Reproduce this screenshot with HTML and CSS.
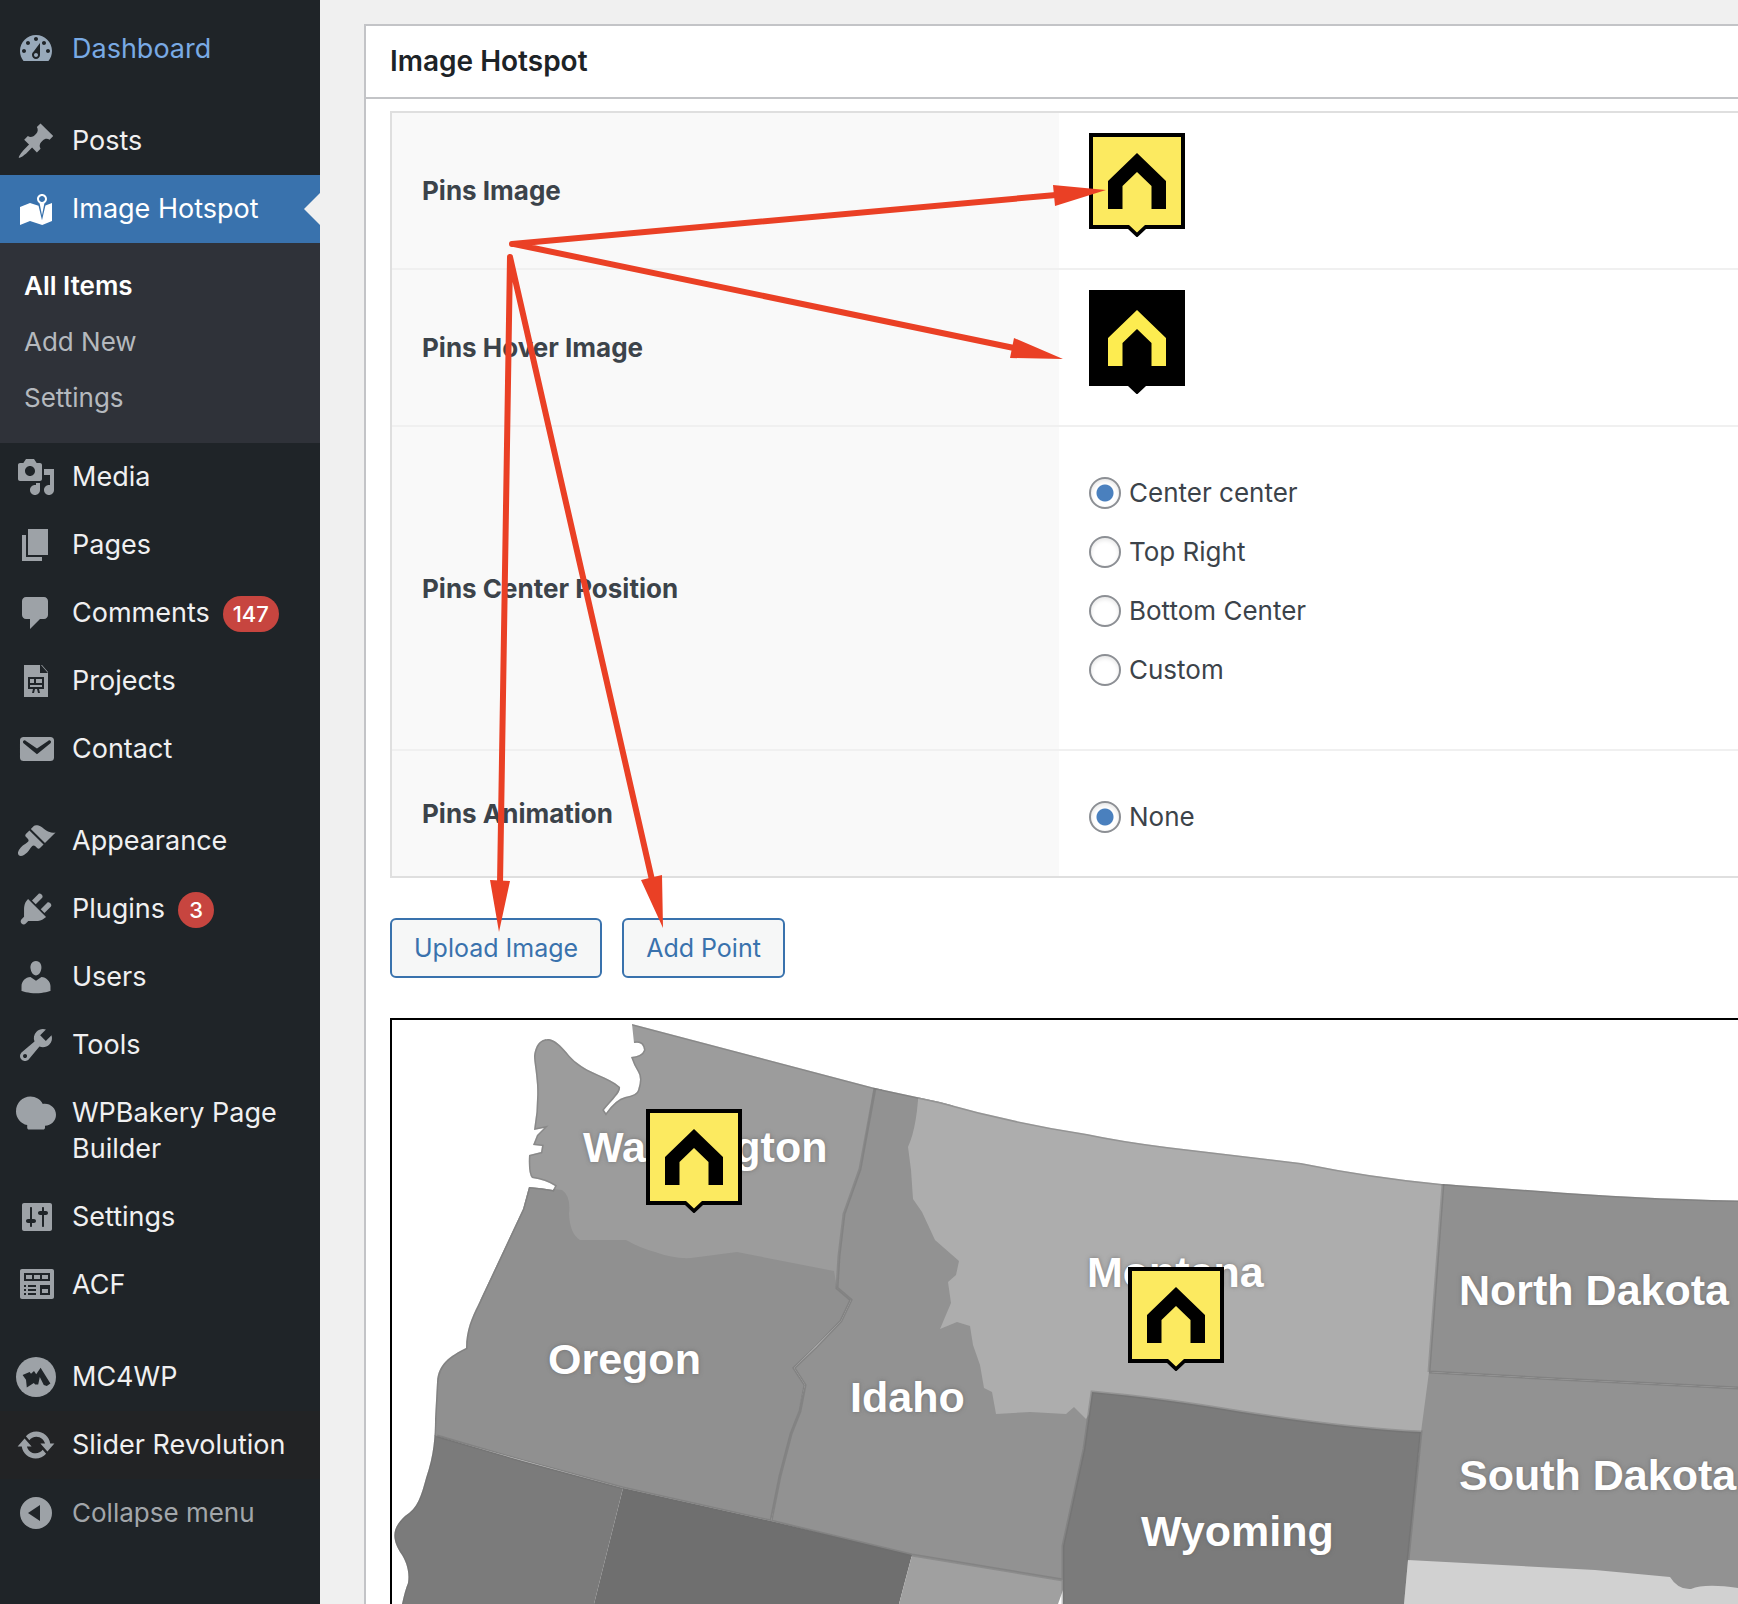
FILE: index.html
```html
<!DOCTYPE html>
<html lang="en">
<head>
    <meta charset="UTF-8">
    <meta name="viewport" content="width=device-width, initial-scale=1.0">
    <title>Image Hotspot</title>
    <link rel="stylesheet" href="styles.css">
</head>
<body>
    <!-- shared pin shape -->
    <svg class="defs" aria-hidden="true">
        <symbol id="pin" viewBox="0 0 96 104">
            <path class="pin-frame" d="M0 0h96v96H57l-9 8.500-9-8.500H0z"/>
            <path class="pin-face" d="M4 4h88v88H56l-8 7.500L40 92H4z"/>
            <path class="pin-house" d="M48 20L77 48V76H62.500V53L48 39 33.500 53V76H19V48z"/>
        </symbol>
    </svg>

    <aside class="sidebar">
        <nav>
            <ul class="menu">
                <li class="hover"><a href="#">
                    <svg class="icon" viewBox="0 0 20 20"><path d="M3.760 16h12.480C17.340 14.630 18 12.900 18 11c0-4.410-3.580-8-8-8s-8 3.590-8 8c0 1.900.66 3.630 1.760 5zM10 4c.55 0 1 .45 1 1s-.45 1-1 1-1-.45-1-1 .45-1 1-1zM6 6c.55 0 1 .45 1 1s-.45 1-1 1-1-.45-1-1 .45-1 1-1zm8 0c.55 0 1 .45 1 1s-.45 1-1 1-1-.45-1-1 .45-1 1-1zm-5.370 5.550L12 7v6c0 1.100-.9 2-2 2s-2-.9-2-2c0-.57.24-1.080.63-1.450zM4 10c.55 0 1 .45 1 1s-.45 1-1 1-1-.45-1-1 .45-1 1-1zm12 0c.55 0 1 .45 1 1s-.45 1-1 1-1-.45-1-1 .45-1 1-1zm-5 3c0-.55-.45-1-1-1s-1 .45-1 1 .45 1 1 1 1-.45 1-1z"/></svg>
                    <span class="name">Dashboard</span></a></li>
                <li class="separator"></li>
                <li><a href="#">
                    <svg class="icon" viewBox="0 0 20 20"><path d="M10.440 3.020l1.820-1.820 6.360 6.350-1.830 1.820c-1.050-.68-2.480-.57-3.410.36l-.75.75c-.92.93-1.040 2.350-.35 3.410l-1.830 1.820-2.410-2.410-2.800 2.790c-.42.42-3.380 2.710-3.800 2.290s1.860-3.390 2.280-3.810l2.790-2.790L4.100 9.360l1.830-1.820c1.050.69 2.480.57 3.400-.36l.75-.75c.93-.92 1.050-2.350.36-3.410z"/></svg>
                    <span class="name">Posts</span></a></li>
                <li class="current"><a href="#">
                    <svg class="icon" viewBox="0 0 20 20"><path d="M13 13.140l1.170-5.940c.79-.43 1.330-1.250 1.330-2.200 0-1.380-1.120-2.500-2.500-2.500S10.500 3.620 10.500 5c0 .95.54 1.770 1.330 2.200zm0-9.640c.83 0 1.500.67 1.500 1.500s-.67 1.500-1.500 1.500-1.500-.67-1.500-1.500.67-1.500 1.500-1.500zm1.720 4.800L18 6.970v9L13.120 18 7 15.970l-5 2v-9l5-2 4.270 1.410 1.730 7.300z"/></svg>
                    <span class="name">Image Hotspot</span></a>
                    <ul class="submenu">
                        <li><a href="#" class="active">All Items</a></li>
                        <li><a href="#">Add New</a></li>
                        <li><a href="#">Settings</a></li>
                    </ul>
                </li>
                <li><a href="#">
                    <svg class="icon" viewBox="0 0 20 20"><path d="M13 11V4c0-.55-.45-1-1-1h-1.670L9 1H5L3.670 3H2c-.55 0-1 .45-1 1v7c0 .55.45 1 1 1h10c.55 0 1-.45 1-1zM7 4.500c1.380 0 2.500 1.120 2.500 2.500S8.380 9.500 7 9.500 4.500 8.380 4.500 7 5.620 4.500 7 4.500zM14 6h5v10.500c0 1.380-1.120 2.500-2.500 2.500S14 17.880 14 16.500s1.120-2.500 2.500-2.500c.17 0 .34.02.5.05V9h-3V6zm-4 8.050V13h2v3.500c0 1.380-1.120 2.500-2.500 2.500S7 17.880 7 16.500 8.120 14 9.500 14c.17 0 .34.02.5.05z"/></svg>
                    <span class="name">Media</span></a></li>
                <li><a href="#">
                    <svg class="icon" viewBox="0 0 20 20"><path d="M6 15V2h10v13H6zm-1 1h8v2H3V5h2v11z"/></svg>
                    <span class="name">Pages</span></a></li>
                <li><a href="#">
                    <svg class="icon" viewBox="0 0 20 20"><path d="M5 2h9c1.100 0 2 .9 2 2v7c0 1.100-.9 2-2 2h-2l-5 5v-5H5c-1.100 0-2-.9-2-2V4c0-1.100.9-2 2-2z"/></svg>
                    <span class="name">Comments</span><span class="badge">147</span></a></li>
                <li><a href="#">
                    <svg class="icon" viewBox="0 0 20 20"><path fill-rule="evenodd" d="M4 2h8v4h4v12H4zM13 2l3 3.500V6l-3.500-4zM6 8v6h2.500L8 16h1l.5-2h1l.5 2h1l-.5-2H14V8zM7 9h2v2H7zM10 9h3v2h-3zM7 12h6v1H7z"/></svg>
                    <span class="name">Projects</span></a></li>
                <li><a href="#">
                    <svg class="icon" viewBox="0 0 20 20"><path d="M3.870 4h13.250C18.370 4 19 4.590 19 5.790v8.420c0 1.190-.63 1.790-1.880 1.790H3.870c-1.250 0-1.880-.6-1.880-1.790V5.790c0-1.200.63-1.790 1.880-1.790zm6.620 8.600l6.740-5.530c.24-.2.43-.66.13-1.070-.29-.41-.82-.42-1.170-.17l-5.700 3.860L4.800 5.830c-.35-.25-.88-.24-1.170.17-.3.41-.11.87.13 1.070z"/></svg>
                    <span class="name">Contact</span></a></li>
                <li class="separator"></li>
                <li><a href="#">
                    <svg class="icon" viewBox="0 0 20 20"><path d="M14.480 11.060L7.410 3.990l1.500-1.500c.5-.56 2.300-.47 3.510.32 1.210.8 1.430 1.280 2.910 2.100 1.180.64 2.450 1.260 4.450.85zm-.71.71L6.700 4.700 4.930 6.470c-.39.39-.39 1.020 0 1.410l1.060 1.060c.39.39.39 1.030 0 1.420-.6.6-1.430 1.110-2.210 1.690-.35.26-.7.53-1.010.84C1.430 14.230.4 16.080 1.400 17.070c.99 1 2.840-.03 4.180-1.360.31-.31.58-.66.85-1.020.57-.78 1.080-1.610 1.690-2.210.39-.39 1.020-.39 1.410 0l1.060 1.060c.39.39 1.020.39 1.410 0z"/></svg>
                    <span class="name">Appearance</span></a></li>
                <li><a href="#">
                    <svg class="icon" viewBox="0 0 20 20"><path d="M13.110 4.360L9.870 7.600 8 5.730l3.240-3.240c.35-.34 1.050-.2 1.560.32.52.51.66 1.210.31 1.550zm-8 1.770l.91-1.120 9.010 9.010-1.190.84c-.71.71-2.630 1.160-3.820 1.160H6.140L4.900 17.260c-.59.59-1.540.59-2.120 0-.59-.58-.59-1.530 0-2.120l1.240-1.240v-3.880c0-1.130.4-3.190 1.090-3.890zm7.260 3.970l3.240-3.240c.34-.35 1.040-.21 1.550.31.52.51.66 1.210.31 1.550l-3.240 3.250z"/></svg>
                    <span class="name">Plugins</span><span class="badge">3</span></a></li>
                <li><a href="#">
                    <svg class="icon" viewBox="0 0 20 20"><path d="M10 9.250c-2.270 0-2.730-3.440-2.730-3.440C7 4.020 7.820 2 9.970 2c2.160 0 2.980 2.020 2.710 3.810 0 0-.41 3.440-2.680 3.440zm0 2.570L12.720 10c2.390 0 4.520 2.330 4.520 4.530v2.490s-3.650 1.130-7.240 1.130c-3.650 0-7.240-1.130-7.240-1.130v-2.490c0-2.250 1.940-4.480 4.470-4.480z"/></svg>
                    <span class="name">Users</span></a></li>
                <li><a href="#">
                    <svg class="icon" viewBox="0 0 20 20"><path d="M16.680 9.770c-1.340 1.340-3.300 1.670-4.950.99l-5.410 6.520c-.99.99-2.590.99-3.580 0s-.99-2.590 0-3.570l6.520-5.420c-.68-1.650-.35-3.610.99-4.950 1.280-1.280 3.120-1.620 4.720-1.060l-2.890 2.890 2.820 2.820 2.860-2.870c.53 1.580.18 3.390-1.080 4.650zM3.810 16.210c.4.39 1.040.39 1.430 0 .4-.4.4-1.040 0-1.430-.39-.4-1.030-.4-1.430 0-.39.39-.39 1.030 0 1.430z"/></svg>
                    <span class="name">Tools</span></a></li>
                <li><a href="#">
                    <svg class="icon" viewBox="0 0 20 20"><path d="M7.200 1.800c2.700 0 5 1.400 6.200 3.700C17 4.900 20 7.600 20 10.900c0 3-2.400 5.400-5.500 5.500v1c0 .5-.4.9-.9.9H6.500c-.5 0-.9-.4-.9-.9v-1.400C2.400 15.300 0 12.500 0 9.200 0 5.100 3.200 1.800 7.200 1.800z"/></svg>
                    <span class="name">WPBakery Page Builder</span></a></li>
                <li><a href="#">
                    <svg class="icon" viewBox="0 0 20 20"><path d="M18 16V4c0-.55-.45-1-1-1H4c-.55 0-1 .45-1 1v12c0 .55.45 1 1 1h13c.55 0 1-.45 1-1zM8 11h1c.55 0 1 .45 1 1s-.45 1-1 1H8v1.500c0 .28-.22.5-.5.5s-.5-.22-.5-.5V13H6c-.55 0-1-.45-1-1s.45-1 1-1h1V5.500c0-.28.22-.5.5-.5s.5.22.5.5V11zm5-2h-1c-.55 0-1-.45-1-1s.45-1 1-1h1V5.500c0-.28.22-.5.5-.5s.5.22.5.5V7h1c.55 0 1 .45 1 1s-.45 1-1 1h-1v5.500c0 .28-.22.5-.5.5s-.5-.22-.5-.5V9z"/></svg>
                    <span class="name">Settings</span></a></li>
                <li><a href="#">
                    <svg class="icon" viewBox="0 0 20 20"><path fill-rule="evenodd" d="M3 2h15c.6 0 1 .4 1 1v13c0 .6-.4 1-1 1H3c-.6 0-1-.4-1-1V3c0-.6.4-1 1-1zM4 4v4h13V4zM5 5h3v2H5zM9 5h3v2H9zM13 5h3v2h-3zM4 10v1h1v-1zM6 10v1h4v-1zM4 12v1h1v-1zM6 12v1h4v-1zM4 14v1h1v-1zM6 14v1h4v-1zM12 10v5h5v-5zM13 12h3v2h-3z"/></svg>
                    <span class="name">ACF</span></a></li>
                <li class="separator"></li>
                <li><a href="#">
                    <svg class="icon" viewBox="0 0 20 20"><circle cx="10" cy="10" r="10"/><path class="hole" d="M3.300 9L6.800 7.500l.7.900L9 7l1.100 1.600 2.200-3.200 4.900 7.800-1.800 1.300-1.500-.5-2-4-.8 3.700-1.500.1-.7-.8-3.500 2.200-.4-3.800z"/></svg>
                    <span class="name">MC4WP</span></a></li>
                <li class="shaded"><a href="#">
                    <svg class="icon" viewBox="0 0 20 20"><path d="M10.200 3.280c3.530 0 6.430 2.610 6.920 6h2.080l-3.500 4-3.500-4h2.320c-.45-1.970-2.210-3.450-4.320-3.450-1.450 0-2.730.71-3.540 1.780L4.950 5.660C6.230 4.200 8.110 3.280 10.200 3.280zm-.4 13.440c-3.520 0-6.430-2.610-6.920-6H.8l3.500-4c1.170 1.330 2.330 2.670 3.500 4H5.480c.45 1.970 2.210 3.450 4.320 3.450 1.450 0 2.730-.71 3.540-1.780l1.710 1.950c-1.280 1.460-3.150 2.380-5.250 2.380z"/></svg>
                    <span class="name">Slider Revolution</span></a></li>
            </ul>
        </nav>
        <button type="button" class="collapse">
            <svg class="icon" viewBox="0 0 20 20"><path fill-rule="evenodd" d="M10 2a8 8 0 1 1 0 16 8 8 0 0 1 0-16zM12 6l-6 4 6 4z"/></svg>
            <span>Collapse menu</span>
        </button>
    </aside>

    <main class="content">
        <section class="postbox">
            <h2>Image Hotspot</h2>
            <div class="inside">
                <table class="fields">
                    <tr>
                        <th scope="row">Pins Image</th>
                        <td class="image"><svg class="pin"><use href="#pin"/></svg></td>
                    </tr>
                    <tr>
                        <th scope="row">Pins Hover Image</th>
                        <td class="image"><svg class="pin pin-hover"><use href="#pin"/></svg></td>
                    </tr>
                    <tr>
                        <th scope="row">Pins Center Position</th>
                        <td>
                            <div class="radios spaced">
                                <label><input type="radio" name="position" checked>Center center</label>
                                <label><input type="radio" name="position">Top Right</label>
                                <label><input type="radio" name="position">Bottom Center</label>
                                <label><input type="radio" name="position">Custom</label>
                            </div>
                        </td>
                    </tr>
                    <tr>
                        <th scope="row">Pins Animation</th>
                        <td>
                            <div class="radios">
                                <label><input type="radio" name="animation" checked>None</label>
                            </div>
                        </td>
                    </tr>
                </table>

                <div class="actions">
                    <button type="button" class="button">Upload Image</button>
                    <button type="button" class="button">Add Point</button>
                </div>

                <div class="map">
                    <svg class="states" width="1346" height="584" viewBox="392 1020 1346 584">
                        <defs>
                            <clipPath id="land">
                                <path id="coast" d="M632 1024L875 1088 940 1102Q1010 1122 1087 1134 1120 1141 1167 1147L1301 1163Q1370 1177 1442 1184L1541 1191Q1640 1199 1760 1201V1620H400L402 1604Q405 1590 408 1583C410 1570 405 1560 402 1555 390 1538 393 1527 405 1516 418 1508 421 1496 426 1478 434 1455 435 1436 435 1419L437 1382C438 1364 450 1356 466 1348 466 1330 472 1317 478 1305L501 1256 523 1209 529 1187Q542 1188 553 1190L555 1186Q546 1180 532 1178 528 1174 529 1155L541 1152 542 1146 533 1145 537 1135 544 1128 534 1130Q538 1108 537 1085C536 1070 534 1062 534 1056 536 1042 542 1039 549 1039 560 1041 568 1056 576 1062 590 1074 608 1076 620 1087 621 1092 614 1098 604 1110L606 1113Q616 1099 625 1097 637 1095 638 1090 642 1078 638 1072 634 1066 631 1057 642 1056 644 1050 643 1041 634 1043 632 1035z"/>
                            </clipPath>
                        </defs>
                        <g clip-path="url(#land)">
                            <rect class="washington" x="392" y="1020" width="490" height="280"/>
                            <path class="oregon" d="M392 1186H529L562 1190Q571 1196 569 1214 570 1234 580 1240L626 1240Q640 1248 655 1252 674 1259 691 1258L737 1252 834 1271 837 1288 851 1300 841 1321 794 1368 805 1385 771 1521 623 1488 392 1424z"/>
                            <path class="idaho" d="M875 1080L860 1169 844 1214 839 1256 837 1288 851 1300 841 1321 816 1347 794 1368 805 1385 791 1434 780 1476 771 1521 909 1556 1064 1582 1100 1380 1000 1200 940 1080z"/>
                            <path class="montana" d="M919 1080Q918 1125 908 1147L911 1170 913 1199 922 1212 935 1240 959 1261 956 1275 948 1282 951 1303 940 1329 957 1322 970 1326 973 1345 980 1365 984 1388 992 1392 996 1414 1030 1412 1066 1414 1074 1407 1086 1419 1092 1410 1421 1450 1460 1170z"/>
                            <path class="oregon" d="M1443 1170V1184L1429 1372 1557 1379 1738 1388V1170z"/>
                            <path class="idaho" d="M1429 1372L1557 1379 1738 1388V1604H1400L1421 1432z"/>
                            <path class="wyoming" d="M1092 1392Q1160 1398 1242 1412 1350 1429 1421 1432L1408 1560 1404 1604H1063V1546L1084 1449z"/>
                            <path class="california" d="M392 1424L437 1436 523 1461 623 1488 594 1604H392z"/>
                            <path class="nevada" d="M623 1488L771 1521 912 1555 899 1604H594z"/>
                            <path class="utah" d="M912 1555L1063 1580V1590L1058 1604H899z"/>
                            <path class="nebraska" d="M1408 1560L1595 1570 1670 1577Q1678 1590 1691 1589 1705 1583 1738 1588V1604H1404z"/>
                            <path class="border" d="M875 1088L860 1169 844 1214 839 1256 837 1288 851 1300 841 1321 816 1347 794 1368 805 1385 800 1411 791 1434 780 1476 771 1521M437 1436L523 1461 623 1488 771 1521 912 1555 1063 1580M1429 1372L1557 1379 1738 1388M1084 1449L1092 1392Q1160 1398 1242 1412 1350 1429 1421 1432L1408 1560M1084 1449L1063 1546V1604M1443 1184L1429 1372"/>
                            <use class="border" href="#coast"/>
                        </g>
                        <g class="state-names">
                            <text x="583" y="1162">Washington</text>
                            <text x="548" y="1374">Oregon</text>
                            <text x="850" y="1412">Idaho</text>
                            <text x="1087" y="1287">Montana</text>
                            <text x="1459" y="1305">North Dakota</text>
                            <text x="1459" y="1490">South Dakota</text>
                            <text x="1141" y="1546">Wyoming</text>
                        </g>
                    </svg>
                    <svg class="pin point point-washington"><use href="#pin"/></svg>
                    <svg class="pin point point-montana"><use href="#pin"/></svg>
                </div>
            </div>
        </section>
    </main>

    <!-- arrows drawn over the screen -->
    <svg class="arrows" width="1200" height="1000" aria-hidden="true">
        <path class="line" d="M512 244L1056 195M514 244L1014 348M510 257L500 884M510 257L652 880"/>
        <path class="head" d="M1053 185L1106 190 1055 206zM1014 338L1063 359 1010 358zM490 880L510 881 499 932zM641 880L662 875 663 928z"/>
    </svg>
</body>
</html>
```

FILE: styles.css
```css
* {
    box-sizing: border-box;
}
body {
    position: relative;
    display: flex;
    min-height: 100vh;
    margin: 0;
    overflow-x: hidden;
    background-color: #f0f0f0;
    color: #3c434a;
    font-family: Inter, "Liberation Sans", sans-serif;
    font-size: 26px;
}
ul {
    list-style: none;
    margin: 0;
    padding: 0;
}
a {
    text-decoration: none;
}
button {
    font-family: inherit;
    cursor: pointer;
}
.defs {
    position: absolute;
    width: 0;
    height: 0;
}

/* sidebar */
.sidebar {
    flex: 0 0 320px;
    padding-top: 15px;
    background-color: #1f2428;
}
.menu {
    font-size: 27px;
    line-height: 36px;
}
.menu > li > a {
    position: relative;
    display: flex;
    align-items: flex-start;
    padding: 14px 16px;
    color: #f0f0f1;
}
.icon {
    flex: none;
    width: 40px;
    height: 40px;
    margin-right: 16px;
    fill: #9da2a7;
}
.icon .hole {
    fill: #1f2428;
}
.name {
    padding: 2px 0;
}
.menu > .separator {
    height: 24px;
}
.menu > .hover > a {
    color: #79aae4;
}
.hover .icon {
    fill: #98a9ba;
}
.menu > .current > a {
    background-color: #3972ad;
    color: #fff;
}
.current > a::after {
    content: "";
    position: absolute;
    right: 0;
    top: 18px;
    border: 16px solid transparent;
    border-left: 0;
    border-right-color: #f0f0f0;
}
.current .icon {
    fill: #fff;
}
.menu > .shaded {
    background-color: #222325;
}
.submenu {
    padding: 15px 0 17px;
    background-color: #2f3239;
}
.submenu a {
    display: block;
    padding: 0 24px;
    color: #b5b9be;
    font-size: 26px;
    line-height: 56px;
}
.submenu .active {
    color: #fff;
    font-weight: 600;
}
.badge {
    min-width: 36px;
    height: 36px;
    margin: 3px 0 0 13px;
    padding: 0 10px;
    border-radius: 18px;
    background-color: #c7453f;
    color: #fff;
    font-size: 22px;
    font-weight: 500;
    text-align: center;
}
.collapse {
    display: flex;
    align-items: center;
    width: 100%;
    padding: 14px 16px;
    border: none;
    background: none;
    color: #a2a6aa;
    font-size: 26px;
    line-height: 36px;
}

/* content */
.content {
    flex: 1;
    min-width: 0;
    padding: 24px 0 0 44px;
}
.postbox {
    border: 2px solid #c3c4c7;
    border-width: 2px 0 0 2px;
    background-color: #fff;
}
.postbox h2 {
    margin: 0;
    padding: 0 24px;
    border-bottom: 2px solid #c3c4c7;
    color: #1d2327;
    font-size: 28px;
    font-weight: 600;
    line-height: 71px;
}
.inside {
    padding: 12px 0 0 24px;
}
.fields {
    width: 100%;
    border: 2px solid #dfdfdf;
    border-right: 0;
    border-spacing: 0;
}
.fields th {
    width: 667px;
    padding: 0 30px;
    background-color: #f9f9f9;
    font-weight: 700;
    text-align: left;
}
.fields td {
    padding: 36px 30px 30px;
}
.fields th,
.fields td {
    border-bottom: 2px solid #f0f0f0;
}
.fields tr:last-child > * {
    border-bottom: 0;
}
.fields .image {
    padding: 20px 30px 31px;
}
.pin {
    --face: #fcea60;
    --house: #000;
    display: block;
    width: 96px;
    height: 104px;
}
.pin-hover {
    --face: #000;
    --house: #fdec50;
}
.pin-face {
    fill: var(--face);
}
.pin-house {
    fill: var(--house);
}
.radios label {
    display: flex;
    align-items: center;
    line-height: 59px;
}
.radios.spaced {
    margin-bottom: 20px;
}
.radios input {
    appearance: none;
    width: 32px;
    height: 32px;
    margin: 0 8px 0 0;
    border: 2px solid #8c8f94;
    border-radius: 50%;
    background-color: #fff;
    box-shadow: inset 0 2px 4px rgba(0, 0, 0, 0.1);
}
.radios input:checked {
    background-image: radial-gradient(circle, #4a80be 8px, transparent 9px);
}
.actions {
    display: flex;
    gap: 20px;
    padding: 40px 0;
}
.button {
    height: 60px;
    padding: 0 22px;
    border: 2px solid #3972ad;
    border-radius: 6px;
    background-color: #f6f7f7;
    color: #3972ad;
    font-size: 25px;
}

/* map */
.map {
    position: relative;
    overflow: hidden;
    border: 2px solid #000;
    border-width: 2px 0 0 2px;
}
.states {
    display: block;
}
.washington {
    fill: #9c9c9c;
}
.oregon {
    fill: #909090;
}
.idaho {
    fill: #929292;
}
.montana {
    fill: #adadad;
}
.wyoming,
.california {
    fill: #7b7b7b;
}
.nevada {
    fill: #6f6f6f;
}
.utah {
    fill: #a0a0a0;
}
.nebraska {
    fill: #d1d1d1;
}
.border {
    fill: none;
    stroke: #6e6e6e;
    stroke-opacity: 0.4;
    stroke-width: 3px;
}
.state-names {
    fill: #fff;
    font-family: "Liberation Sans", Arial, sans-serif;
    font-size: 43px;
    font-weight: bold;
    text-shadow: 0 0 4px rgba(90, 90, 90, 0.6);
}
.point {
    position: absolute;
}
.point-washington {
    left: 254px;
    top: 89px;
}
.point-montana {
    left: 736px;
    top: 247px;
}

.arrows {
    position: absolute;
    left: 0;
    top: 0;
    pointer-events: none;
}
.line {
    fill: none;
    stroke: #ea4025;
    stroke-width: 6px;
    stroke-linecap: round;
}
.head {
    fill: #ea4025;
}
```
